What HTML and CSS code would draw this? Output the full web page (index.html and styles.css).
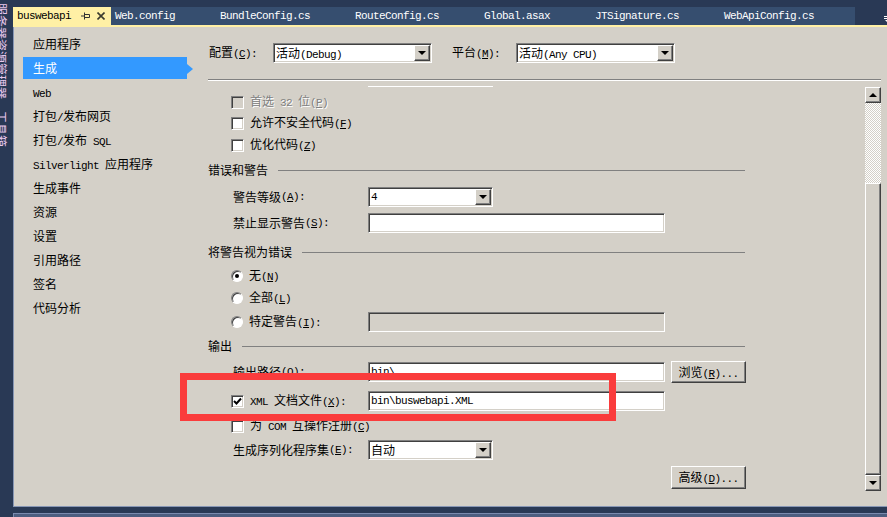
FILE: index.html
```html
<!DOCTYPE html>
<html lang="zh-CN">
<head>
  <meta charset="UTF-8">
  <title>buswebapi - 生成</title>
  <link rel="stylesheet" href="styles.css">
</head>
<body>
<div class="ide">

  <!-- auto-hide dock on the left -->
  <div class="dock">
    <span class="dock-tab">服务器资源管理器</span>
    <span class="dock-tab">工具箱</span>
  </div>

  <div class="doc">
    <div class="tabs">
      <div class="tab active">
        <span>buswebapi</span>
        <svg class="pin" width="10" height="8" viewBox="0 0 10 8"><path d="M0 4h3M3.5 0.5v7M3.5 2.5h5v3h-5" fill="none" stroke="#333" stroke-width="1"/></svg>
        <svg class="close" width="8" height="8" viewBox="0 0 8 8"><path d="M0.5 0.5l7 7M7.5 0.5l-7 7" stroke="#3a3a2e" stroke-width="1.6"/></svg>
      </div>
      <div class="tab">Web.config</div>
      <div class="tab">BundleConfig.cs</div>
      <div class="tab">RouteConfig.cs</div>
      <div class="tab">Global.asax</div>
      <div class="tab">JTSignature.cs</div>
      <div class="tab">WebApiConfig.cs</div>
      <div class="tab-menu">
        <svg width="8" height="8" viewBox="0 0 8 8"><path d="M0 1.5h8M0 3.5h8" stroke="#fff" stroke-width="1"/><path d="M1 5h6l-3 3z" fill="#fff"/></svg>
      </div>
    </div>

    <div class="page">
      <ul class="side">
        <li>应用程序</li>
        <li class="on">生成</li>
        <li><span class="en">Web</span></li>
        <li>打包<span class="en">/</span>发布网页</li>
        <li>打包<span class="en">/</span>发布<span class="en"> SQL</span></li>
        <li><span class="en">Silverlight </span>应用程序</li>
        <li>生成事件</li>
        <li>资源</li>
        <li>设置</li>
        <li>引用路径</li>
        <li>签名</li>
        <li>代码分析</li>
      </ul>

      <div class="main">
        <div class="config">
          <span class="cfg-label">配置<span class="en">(<u>C</u>):</span></span>
          <div class="select wide"><span class="val">活动<span class="en">(Debug)</span></span><span class="btn raise"><i class="down"></i></span></div>
          <span class="cfg-label gap">平台<span class="en">(<u>M</u>):</span></span>
          <div class="select wide"><span class="val">活动<span class="en">(Any CPU)</span></span><span class="btn raise"><i class="down"></i></span></div>
        </div>
        <div class="sep"></div>

        <div class="scroller">
          <div class="form">
            <div class="edge"></div>
            <div class="grid">
              <div class="row disabled"><span class="box"></span><span>首选<span class="en"> 32 </span>位<span class="en">(<u>P</u>)</span></span></div>
              <div class="row"><span class="box"></span><span>允许不安全代码<span class="en">(<u>F</u>)</span></span></div>
              <div class="row"><span class="box"></span><span>优化代码<span class="en">(<u>Z</u>)</span></span></div>

              <div class="group">错误和警告</div>
              <div class="row">
                <span class="lbl">警告等级<span class="en">(<u>A</u>):</span></span>
                <div class="select"><span class="val en">4</span><span class="btn raise"><i class="down"></i></span></div>
              </div>
              <div class="row">
                <span class="lbl">禁止显示警告<span class="en">(<u>S</u>):</span></span>
                <div class="input"></div>
              </div>

              <div class="group">将警告视为错误</div>
              <div class="row"><span class="dot on"></span><span>无<span class="en">(<u>N</u>)</span></span></div>
              <div class="row"><span class="dot"></span><span>全部<span class="en">(<u>L</u>)</span></span></div>
              <div class="row">
                <span class="lbl flat"><span class="dot"></span><span>特定警告<span class="en">(<u>I</u>):</span></span></span>
                <div class="input off"></div>
              </div>

              <div class="group">输出</div>
              <div class="row">
                <span class="lbl">输出路径<span class="en">(<u>O</u>):</span></span>
                <div class="input">bin\</div>
                <div class="button raise">浏览<span class="en">(<u>R</u>)...</span></div>
              </div>
              <div class="row">
                <span class="lbl flat"><span class="box"><svg width="9" height="9" viewBox="0 0 9 9"><path d="M1 4l2.5 2.5L8 1.5" fill="none" stroke="#000" stroke-width="2"/></svg></span><span><span class="en">XML </span>文档文件<span class="en">(<u>X</u>):</span></span></span>
                <div class="input">bin\buswebapi.XML</div>
              </div>
              <div class="row"><span class="box"></span><span>为<span class="en"> COM </span>互操作注册<span class="en">(<u>C</u>)</span></span></div>
              <div class="row">
                <span class="lbl">生成序列化程序集<span class="en">(<u>E</u>):</span></span>
                <div class="select"><span class="val">自动</span><span class="btn raise"><i class="down"></i></span></div>
              </div>
              <div class="row end"><div class="button raise">高级<span class="en">(<u>D</u>)...</span></div></div>
            </div>
          </div>

          <div class="vscroll">
            <div class="sb-btn raise"><i class="up"></i></div>
            <div class="sb-track"></div>
            <div class="sb-thumb raise"></div>
            <div class="sb-btn raise"><i class="down"></i></div>
          </div>
        </div>
      </div>
    </div>

    <div class="status"><div class="status-bar"></div></div>
  </div>

  <!-- red annotation box -->
  <div class="mark"></div>
</div>
</body>
</html>
```

FILE: styles.css
```css
* {
  box-sizing: border-box;
}
body {
  margin: 0;
  background: #293955;
  font: 12px/16px "Noto Sans CJK SC", sans-serif;
  color: #000;
}
.en {
  font-family: "Liberation Mono", monospace;
  font-size: 11px;
  letter-spacing: -0.6px;
}
.ide {
  position: relative;
  display: flex;
  width: 887px;
  height: 517px;
  overflow: hidden;
}

/* left dock strip */
.dock {
  width: 13px;
  flex: none;
  overflow: hidden;
  padding-top: 3px;
}
.dock-tab {
  display: block;
  writing-mode: vertical-rl;
  text-orientation: sideways;
  font-size: 12px;
  line-height: 12px;
  color: #e8c8ee;
  margin-left: -5px;
}
.dock-tab + .dock-tab {
  margin-top: 12px;
}

.doc {
  flex: 1;
  min-width: 0;
  display: flex;
  flex-direction: column;
}

/* document tabs */
.tabs {
  height: 27px;
  flex: none;
  padding-top: 7px;
  border-bottom: 2px solid #fff0a5;
  display: flex;
  overflow: hidden;
}
.tab {
  height: 18px;
  line-height: 18px;
  padding: 0 41px 0 4px;
  background: #364e6f;
  color: #fff;
  font-family: "Liberation Mono", monospace;
  font-size: 11px;
  letter-spacing: -0.6px;
  white-space: nowrap;
  flex: none;
}
.tab.active {
  display: flex;
  align-items: center;
  padding-right: 6px;
  background: #fff0a5;
  color: #000;
}
.tab .pin {
  margin-left: 10px;
}
.tab .close {
  margin-left: 6px;
}
.tab-menu {
  margin-left: auto;
  margin-right: -5px;
  width: 8px;
  padding-top: 3px;
  flex: none;
}

/* property page */
.page {
  height: 480px;
  flex: none;
  display: flex;
  background: #d4d0c8;
  border-left: 1px solid #8796b4;
  border-bottom: 1px solid #8796b4;
}
.side {
  width: 184px;
  flex: none;
  list-style: none;
  margin: 0;
  padding: 6px 0 0 9px;
}
.side li {
  position: relative;
  width: 164px;
  height: 22px;
  line-height: 22px;
  padding-left: 10px;
  margin-bottom: 2px;
}
.side li.on {
  background: #3399ff;
  color: #fff;
}
.side li.on::after {
  content: "";
  position: absolute;
  right: -6px;
  top: 7px;
  border-left: 6px solid #3399ff;
  border-top: 5px solid transparent;
  border-bottom: 5px solid transparent;
}

.main {
  flex: 1;
  min-width: 0;
  display: flex;
  flex-direction: column;
}
.config {
  display: flex;
  align-items: center;
  height: 20px;
  margin-top: 16px;
  padding-left: 11px;
}
.cfg-label {
  width: 64px;
  flex: none;
}
.cfg-label.gap {
  margin-left: 20px;
}
.sep {
  margin: 16px 6px 0 10px;
  border-top: 1px solid #808080;
  border-bottom: 1px solid #fff;
}

.scroller {
  flex: 1;
  min-height: 0;
  display: flex;
}
.form {
  flex: 1;
  min-width: 0;
  padding: 5px 0 0 10px;
  overflow: hidden;
}
.edge {
  height: 1px;
  width: 125px;
  margin-left: 160px;
  background: #fff;
}
.grid {
  display: grid;
  grid-template-rows: 21px 22px 25px 27px 26px 29px 24px 22px 24px 24px 26px 29px 25px 24px 27px 23px;
  padding-top: 4px;
}
.row {
  display: flex;
  align-items: center;
  height: 22px;
  align-self: start;
  padding-left: 23px;
  white-space: nowrap;
}
.row.end {
  height: 23px;
  padding-left: 463px;
}
.disabled {
  color: #808080;
  text-shadow: 1px 1px #fff;
}
.group {
  display: flex;
  align-items: center;
  width: 537px;
  height: 22px;
  align-self: start;
}
.group::after {
  content: "";
  flex: 1;
  margin-left: 10px;
  border-top: 1px solid #808080;
}
.lbl {
  display: flex;
  align-items: center;
  width: 137px;
  flex: none;
  padding-left: 2px;
  white-space: nowrap;
}
.lbl.flat {
  padding-left: 0;
}

/* classic 3d controls */
.raise {
  background: #d4d0c8;
  border: 1px solid;
  border-color: #fff #404040 #404040 #fff;
  box-shadow: inset -1px -1px #808080;
}
.box {
  display: flex;
  align-items: center;
  justify-content: center;
  width: 13px;
  height: 13px;
  flex: none;
  margin-right: 6px;
  background: #fff;
  border: 1px solid;
  border-color: #808080 #fff #fff #808080;
  box-shadow: inset 1px 1px #404040, inset -1px -1px #d4d0c8;
}
.disabled .box {
  background: #d4d0c8;
}
.dot {
  position: relative;
  width: 12px;
  height: 12px;
  flex: none;
  margin-right: 6px;
  border-radius: 50%;
  background: #fff;
  border: 1px solid;
  border-color: #808080 #fff #fff #808080;
  box-shadow: inset 1px 1px #404040;
}
.dot.on::after {
  content: "";
  position: absolute;
  left: 3px;
  top: 3px;
  width: 4px;
  height: 4px;
  border-radius: 50%;
  background: #000;
}
.input {
  width: 297px;
  height: 20px;
  flex: none;
  padding: 0 2px;
  line-height: 18px;
  background: #fff;
  border: 1px solid;
  border-color: #808080 #fff #fff #808080;
  box-shadow: inset 1px 1px #404040, inset -1px -1px #d4d0c8;
  font-family: "Liberation Mono", monospace;
  font-size: 11px;
  letter-spacing: -0.6px;
}
.input.off {
  background: #d4d0c8;
}
.select {
  display: flex;
  width: 125px;
  height: 20px;
  flex: none;
  padding: 1px;
  background: #fff;
  border: 1px solid;
  border-color: #808080 #fff #fff #808080;
  box-shadow: inset 1px 1px #404040, inset -1px -1px #d4d0c8;
}
.select.wide {
  width: 159px;
}
.select .val {
  flex: 1;
  padding-left: 1px;
  line-height: 16px;
  white-space: nowrap;
}
.select .btn {
  display: flex;
  align-items: center;
  justify-content: center;
  width: 16px;
  height: 16px;
}
.down,
.up {
  display: block;
  width: 0;
  height: 0;
  border-left: 4px solid transparent;
  border-right: 4px solid transparent;
}
.down {
  border-top: 4px solid #000;
}
.up {
  border-bottom: 4px solid #000;
}
.button {
  width: 75px;
  height: 22px;
  flex: none;
  margin-left: 6px;
  line-height: 20px;
  text-align: center;
}
.row.end .button {
  height: 23px;
  margin-left: 0;
}

/* vertical scrollbar */
.vscroll {
  width: 16px;
  height: 404px;
  flex: none;
  margin: 6px 6px 0 0;
  display: flex;
  flex-direction: column;
}
.sb-btn {
  height: 16px;
  flex: none;
  display: flex;
  align-items: center;
  justify-content: center;
}
.sb-track {
  height: 80px;
  flex: none;
  background: repeating-conic-gradient(#fff 0 25%, #d4d0c8 0 50%) 0 0 / 2px 2px;
}
.sb-thumb {
  flex: 1;
}

/* bottom strip */
.status {
  flex: 1;
  padding-top: 6px;
}
.status-bar {
  height: 100%;
  background: #4d5e80;
  border-top: 1px solid #7a8aae;
  border-left: 1px solid #7a8aae;
}

.mark {
  position: absolute;
  left: 180px;
  top: 373px;
  width: 436px;
  height: 48px;
  border: 7px solid #fa3c3c;
}
```
